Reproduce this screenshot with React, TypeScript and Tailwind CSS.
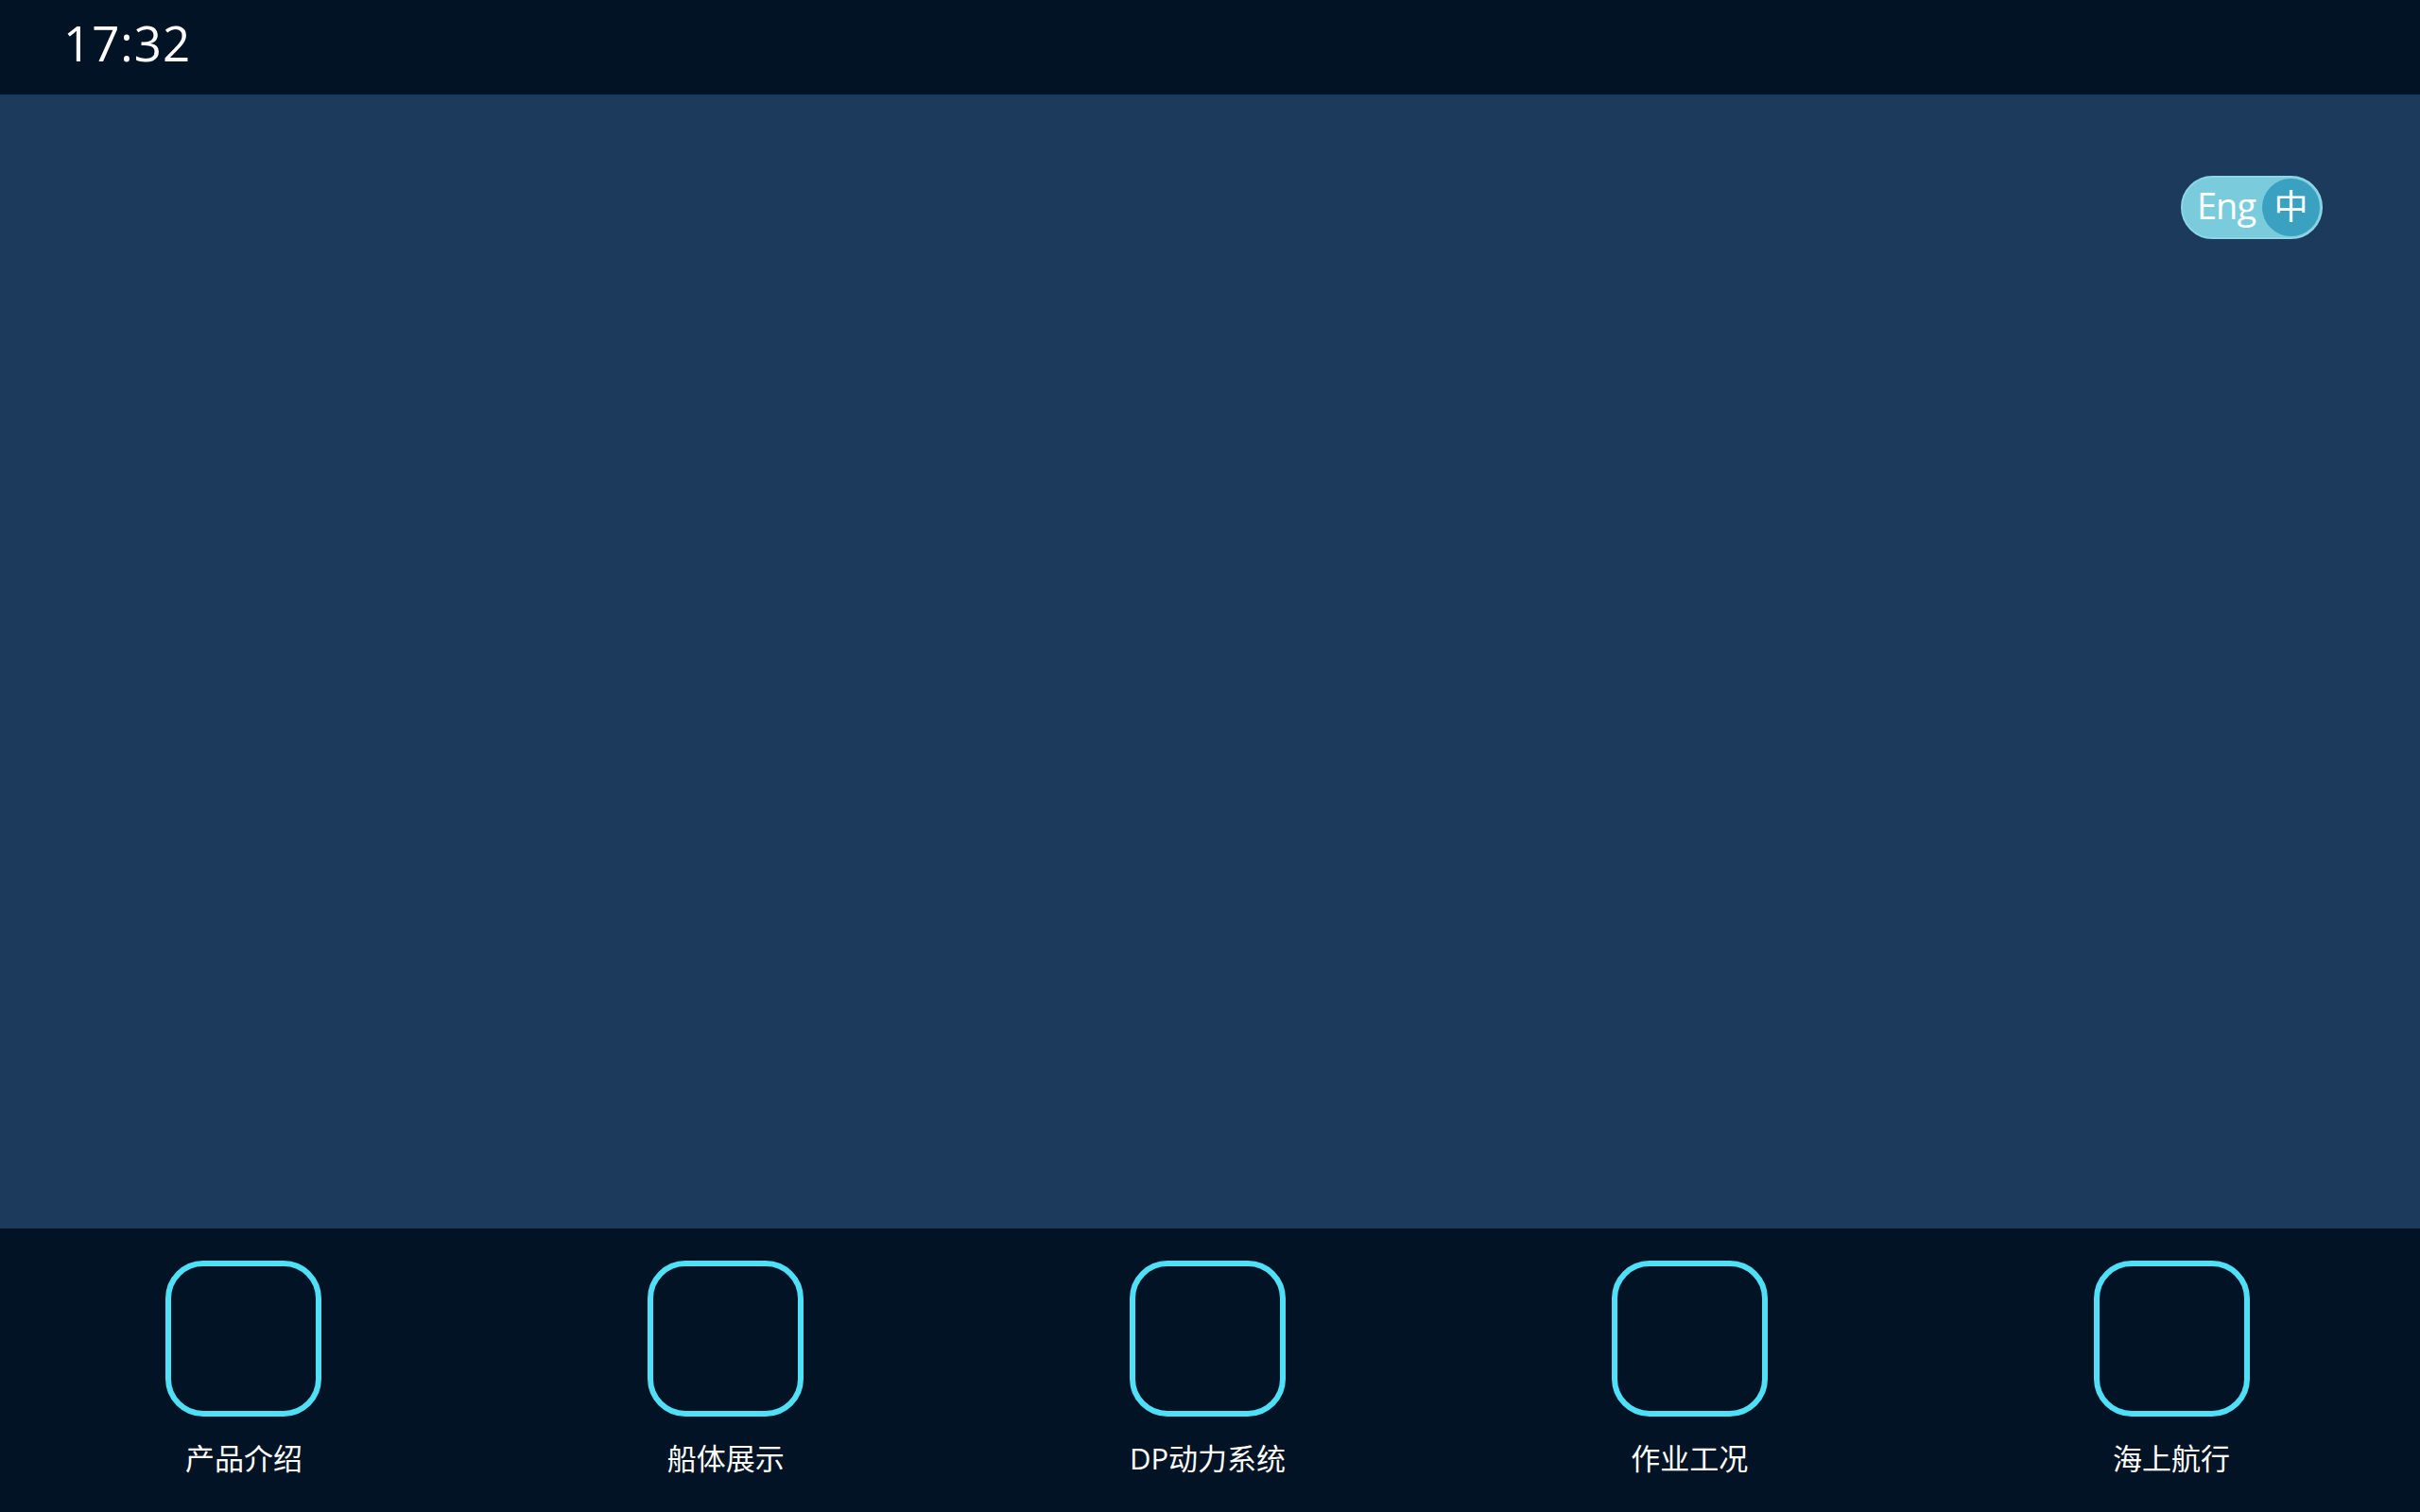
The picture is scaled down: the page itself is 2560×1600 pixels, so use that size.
const navItems = ['产品介绍', '船体展示', 'DP动力系统', '作业工况', '海上航行']

const font = { fontFamily: '"Open Sans", "Noto Sans CJK SC", sans-serif' }

export default function App() {
  return (
    <div className="flex h-screen w-full flex-col bg-[#1c3a5b]" style={font}>
      {/* top status bar */}
      <div className="flex h-[100px] shrink-0 items-center bg-[#011324] pb-[10px] pl-[67px]">
        <span className="text-[51px] leading-none tracking-[1px] text-white">17:32</span>
      </div>

      {/* main area */}
      <div className="flex flex-1 justify-end pr-[103px] pt-[86px]">
        <div className="flex h-[67px] w-[150px] items-center rounded-full border-2 border-[#8dd6e6] bg-[#7accdd] pl-[15px] pr-[1px]">
          <span className="flex-1 pb-[5px] text-[38px] leading-none tracking-[-1px] text-white">Eng</span>
          <span className="flex h-[61px] w-[61px] items-center justify-center rounded-full bg-[#3ba1c0] pb-[2px] text-[36px] leading-none text-white">
            中
          </span>
        </div>
      </div>

      {/* bottom nav */}
      <div className="grid h-[300px] shrink-0 grid-cols-5 bg-[#011324] pl-[3px] pr-[8px] pt-[34px]">
        {navItems.map((label) => (
          <div key={label} className="flex flex-col items-center">
            <div className="h-[165px] w-[165px] rounded-[40px] border-[6px] border-[#4fe0f7]" />
            <span className="mt-[24px] text-[31px] leading-[40px] text-white">{label}</span>
          </div>
        ))}
      </div>
    </div>
  )
}
